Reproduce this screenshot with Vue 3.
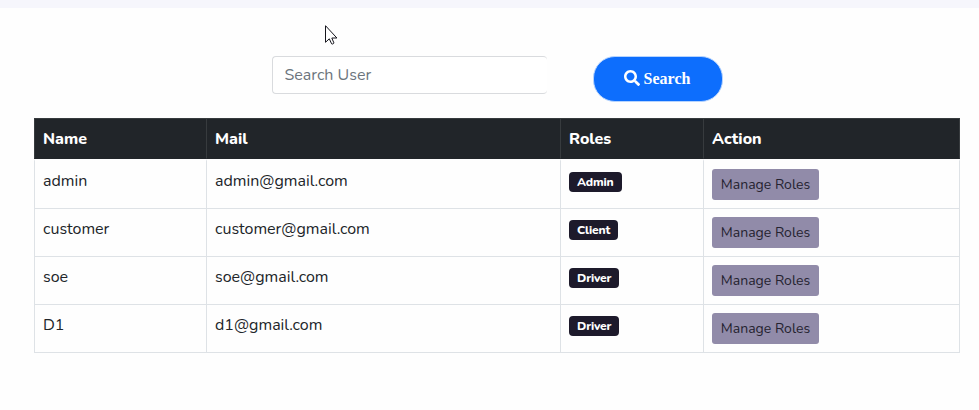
<script setup>
const users = [
  { name: 'admin', mail: 'admin@gmail.com', role: 'Admin' },
  { name: 'customer', mail: 'customer@gmail.com', role: 'Client' },
  { name: 'soe', mail: 'soe@gmail.com', role: 'Driver' },
  { name: 'D1', mail: 'd1@gmail.com', role: 'Driver' },
]
</script>

<template>
  <main class="page">
    <form class="search" @submit.prevent>
      <input class="field" type="text" placeholder="Search User" />
      <button class="submit" type="submit">
        <svg class="glass" viewBox="0 0 512 512" aria-hidden="true">
          <path fill="currentColor" d="M505 442.7L405.3 343c-4.500-4.500-10.600-7-17-7H372c27.600-35.300 44-79.700 44-128C416 93.100 322.900 0 208 0S0 93.100 0 208s93.100 208 208 208c48.300 0 92.700-16.400 128-44v16.300c0 6.400 2.500 12.500 7 17l99.700 99.700c9.400 9.400 24.600 9.400 33.900 0l28.300-28.300c9.400-9.400 9.400-24.600.1-34zM208 336c-70.700 0-128-57.200-128-128 0-70.700 57.200-128 128-128 70.700 0 128 57.200 128 128 0 70.700-57.200 128-128 128z" />
        </svg>
        <span>Search</span>
      </button>
    </form>

    <table class="users">
      <colgroup>
        <col class="c-name" /><col class="c-mail" /><col class="c-role" /><col class="c-action" />
      </colgroup>
      <thead>
        <tr><th>Name</th><th>Mail</th><th>Roles</th><th>Action</th></tr>
      </thead>
      <tbody>
        <tr v-for="user in users" :key="user.name">
          <td>{{ user.name }}</td>
          <td>{{ user.mail }}</td>
          <td><span class="badge">{{ user.role }}</span></td>
          <td><button class="manage" type="button">Manage Roles</button></td>
        </tr>
      </tbody>
    </table>

    <svg class="cursor" viewBox="0 0 13 20" aria-hidden="true">
      <path d="M.5.7v16.600l3.800-3.500 2.300 5c.7.6 2.200 0 2.300-.9L6.800 13h5.100z" fill="#fff" stroke="#15151c" stroke-width="1" />
    </svg>
  </main>
</template>

<style>
body { margin: 0; background: #fefefe; }
</style>

<style scoped>
.page {
  box-sizing: border-box;
  position: relative;
  height: 410px;
  padding: 48px 19px 0 34px;
  border-top: 8px solid #f6f6fc;
  font: 16px/24px Nunito, Lato, sans-serif;
  color: #212529;
  overflow: hidden;
}
.search {
  display: flex;
  align-items: flex-start;
  gap: 46px;
  height: 62px;
  padding-left: 238px;
}
.field {
  box-sizing: border-box;
  width: 275px;
  height: 38px;
  padding: 6px 11.500px;
  border: 1px solid #d9dbde;
  border-right: 0;
  border-radius: 4px;
  background: #fff;
  font: inherit;
  outline: none;
}
.field::placeholder { color: #6c757d; opacity: 1; }
.submit {
  box-sizing: border-box;
  display: flex;
  align-items: center;
  justify-content: center;
  gap: 4px;
  width: 130px;
  height: 46px;
  padding: 0 2px 1px 0;
  border: 1px solid #b6d4fe;
  border-radius: 22px;
  background: #0d6efd;
  color: #fff;
  font: bold 16px/24px "Liberation Serif", serif;
}
.glass { width: 16px; height: 16px; margin-top: -2px; }
.users {
  width: 926px;
  table-layout: fixed;
  border-collapse: separate;
  border-spacing: 0;
}
.c-name { width: 172px; }
.c-mail { width: 354px; }
.c-role { width: 143px; }
.c-action { width: 257px; }
th, td {
  box-sizing: border-box;
  padding: 8px;
  border: solid #dee2e6;
  border-width: 0 0 1px 1px;
  text-align: left;
  vertical-align: top;
}
th:last-child, td:last-child { border-right-width: 1px; }
th {
  height: 41px;
  padding-bottom: 7px;
  border-color: #373b3e;
  border-width: 1px 0 1px 1px;
  border-bottom-color: #212529;
  background: #212529;
  color: #fff;
  font-weight: 800;
}
tbody tr:first-child td { border-top: 2px solid #fefefe; }
.badge {
  display: block;
  width: max-content;
  margin-top: 3px;
  padding: 0 8px;
  border-radius: 4px;
  background: #1d1a2b;
  color: #fff;
  font-size: 12px;
  font-weight: 800;
  line-height: 20px;
  letter-spacing: -0.15px;
}
.manage {
  display: block;
  box-sizing: border-box;
  width: 107px;
  height: 31px;
  padding: 0;
  border: 0;
  border-radius: 3px;
  background: #918ba9;
  color: #252330;
  font: 14px/21px Nunito, Lato, sans-serif;
}
.cursor {
  position: absolute;
  left: 325px;
  top: 17px;
  width: 13px;
  height: 20px;
}
</style>
